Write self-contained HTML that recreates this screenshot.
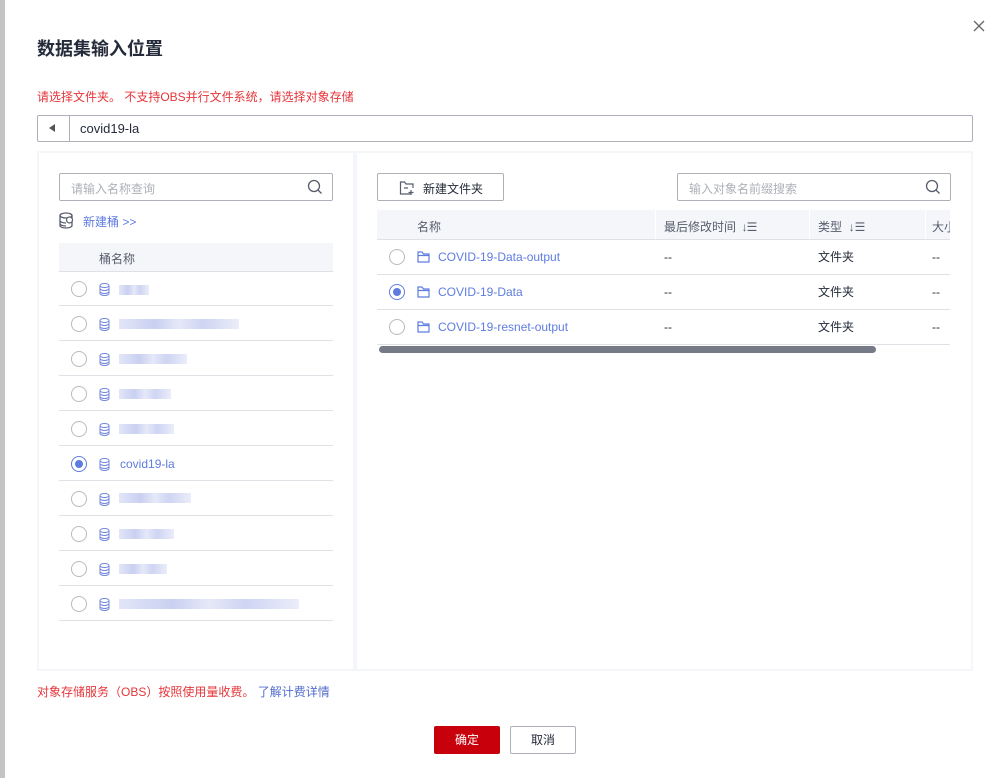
<!DOCTYPE html>
<html><head><meta charset="utf-8"><style>
*{margin:0;padding:0;box-sizing:border-box}
body{width:1004px;height:778px;position:relative;overflow:hidden;background:#fff;font-family:"Liberation Sans","Noto Sans CJK SC",sans-serif;font-size:12px;color:#252b3a}
.a{position:absolute}
.strip{left:0;top:0;width:5px;height:778px;background:#c4c4c4}
.title{left:37px;top:35px;font-size:18px;font-weight:bold;color:#252b3a}
.red{color:#e5353a}
.path{left:37px;top:115px;width:936px;height:27px;border:1px solid #adb0b8;border-radius:2px}
.path .b{position:absolute;left:0;top:0;width:32px;height:25px;border-right:1px solid #adb0b8}
.path .b:after{content:"";position:absolute;left:11px;top:8px;border-right:6px solid #555;border-top:4.5px solid transparent;border-bottom:4.5px solid transparent}
.path .t{position:absolute;left:42px;top:5px;font-size:13px}
.panel{border:2px solid #f5f6fa;background:#fff}
.inp{border:1px solid #adb0b8;border-radius:2px;height:28px;color:#adb0b8;padding:6px 11px}
.sicon{position:absolute;right:9px;top:5px}
.th{background:#f5f6fa;color:#575d6c;height:29px}
.row{position:absolute;left:59px;width:274px;height:35px;border-bottom:1px solid #dfe1e6}
.radio{position:absolute;width:16px;height:16px;border:1px solid #b8bac0;border-radius:50%;background:#fff}
.radio.on{border-color:#5e7ce0}
.radio.on:after{content:"";position:absolute;left:3px;top:3px;width:8px;height:8px;border-radius:50%;background:#5e7ce0}
.blur{position:absolute;height:10px;background:linear-gradient(90deg,#dfe3f7,#c3cbef 30%,#e3e6f8 50%,#c9d0f1 70%,#e8ebf9);opacity:.9}
.link{color:#5e7ce0}
.rrow{position:absolute;left:377px;width:573px;height:35px;border-bottom:1px solid #dfe1e6}
.rrow span{position:absolute;top:10px;line-height:14px}
</style></head><body>
<div class="a strip"></div>
<div class="a title">数据集输入位置</div>
<svg class="a" style="left:973px;top:20px" width="12" height="12"><path d="M1 1l10 10M11 1L1 11" stroke="#666" stroke-width="1.3"/></svg>
<div class="a red" style="left:37px;top:88px">请选择文件夹。 不支持OBS并行文件系统，请选择对象存储</div>
<div class="a path"><div class="b"></div><div class="t">covid19-la</div></div>

<div class="a panel" style="left:37px;top:151px;width:318px;height:520px"></div>
<div class="a panel" style="left:355px;top:151px;width:618px;height:520px"></div>

<div class="a inp" style="left:59px;top:173px;width:274px">请输入名称查询<svg class="sicon" width="16" height="16" viewBox="0 0 16 16"><circle cx="7" cy="7" r="5.5" fill="none" stroke="#575d6c" stroke-width="1.3"/><path d="M11 11l3.5 3.5" stroke="#575d6c" stroke-width="1.3"/></svg></div>
<svg class="a" style="left:59px;top:212px" width="15" height="17" viewBox="0 0 15 17"><ellipse cx="7" cy="3.5" rx="6" ry="2.5" fill="none" stroke="#575d6c" stroke-width="1.3"/><path d="M1 3.5v10c0 1.5 2.7 2.5 6 2.5s6-1 6-2.5v-10M1 8.5c0 1.5 2.7 2.5 6 2.5M1 11.5c0 1.5 2.7 2.5 6 2.5" fill="none" stroke="#575d6c" stroke-width="1.3"/><circle cx="10.5" cy="8" r="3" fill="#fff" stroke="#575d6c" stroke-width="1.2"/></svg>
<div class="a link" style="left:83px;top:213px">新建桶 &gt;&gt;</div>
<div class="a th" style="left:59px;top:243px;width:274px;border-bottom:1px solid #dfe1e6"><span style="position:absolute;left:40px;top:7px">桶名称</span></div>

<div class="row" style="top:271px"><div class="radio" style="left:12px;top:10px"></div><svg class="a" style="left:40px;top:12px" width="11" height="13"><ellipse cx="5.5" cy="2.5" rx="4.5" ry="2" fill="none" stroke="#7186db"/><path d="M1 2.5v8c0 1 2 2 4.5 2s4.5-1 4.5-2v-8M1 5.5c0 1 2 2 4.5 2s4.5-1 4.5-2M1 8.5c0 1 2 2 4.5 2s4.5-1 4.5-2" fill="none" stroke="#7186db"/></svg><div class="blur" style="left:60px;top:14px;width:30px"></div></div>
<div class="row" style="top:306px"><div class="radio" style="left:12px;top:10px"></div><svg class="a" style="left:40px;top:12px" width="11" height="13"><ellipse cx="5.5" cy="2.5" rx="4.5" ry="2" fill="none" stroke="#7186db"/><path d="M1 2.5v8c0 1 2 2 4.5 2s4.5-1 4.5-2v-8M1 5.5c0 1 2 2 4.5 2s4.5-1 4.5-2M1 8.5c0 1 2 2 4.5 2s4.5-1 4.5-2" fill="none" stroke="#7186db"/></svg><div class="blur" style="left:60px;top:13px;width:120px"></div></div>
<div class="row" style="top:341px"><div class="radio" style="left:12px;top:10px"></div><svg class="a" style="left:40px;top:12px" width="11" height="13"><ellipse cx="5.5" cy="2.5" rx="4.5" ry="2" fill="none" stroke="#7186db"/><path d="M1 2.5v8c0 1 2 2 4.5 2s4.5-1 4.5-2v-8M1 5.5c0 1 2 2 4.5 2s4.5-1 4.5-2M1 8.5c0 1 2 2 4.5 2s4.5-1 4.5-2" fill="none" stroke="#7186db"/></svg><div class="blur" style="left:60px;top:13px;width:68px"></div></div>
<div class="row" style="top:376px"><div class="radio" style="left:12px;top:10px"></div><svg class="a" style="left:40px;top:12px" width="11" height="13"><ellipse cx="5.5" cy="2.5" rx="4.5" ry="2" fill="none" stroke="#7186db"/><path d="M1 2.5v8c0 1 2 2 4.5 2s4.5-1 4.5-2v-8M1 5.5c0 1 2 2 4.5 2s4.5-1 4.5-2M1 8.5c0 1 2 2 4.5 2s4.5-1 4.5-2" fill="none" stroke="#7186db"/></svg><div class="blur" style="left:60px;top:13px;width:52px"></div></div>
<div class="row" style="top:411px"><div class="radio" style="left:12px;top:10px"></div><svg class="a" style="left:40px;top:12px" width="11" height="13"><ellipse cx="5.5" cy="2.5" rx="4.5" ry="2" fill="none" stroke="#7186db"/><path d="M1 2.5v8c0 1 2 2 4.5 2s4.5-1 4.5-2v-8M1 5.5c0 1 2 2 4.5 2s4.5-1 4.5-2M1 8.5c0 1 2 2 4.5 2s4.5-1 4.5-2" fill="none" stroke="#7186db"/></svg><div class="blur" style="left:60px;top:13px;width:55px"></div></div>
<div class="row" style="top:446px"><div class="radio on" style="left:12px;top:10px"></div><svg class="a" style="left:40px;top:12px" width="11" height="13"><ellipse cx="5.5" cy="2.5" rx="4.5" ry="2" fill="none" stroke="#7186db"/><path d="M1 2.5v8c0 1 2 2 4.5 2s4.5-1 4.5-2v-8M1 5.5c0 1 2 2 4.5 2s4.5-1 4.5-2M1 8.5c0 1 2 2 4.5 2s4.5-1 4.5-2" fill="none" stroke="#7186db"/></svg><span class="a link" style="left:61px;top:11px">covid19-la</span></div>
<div class="row" style="top:481px"><div class="radio" style="left:12px;top:10px"></div><svg class="a" style="left:40px;top:12px" width="11" height="13"><ellipse cx="5.5" cy="2.5" rx="4.5" ry="2" fill="none" stroke="#7186db"/><path d="M1 2.5v8c0 1 2 2 4.5 2s4.5-1 4.5-2v-8M1 5.5c0 1 2 2 4.5 2s4.5-1 4.5-2M1 8.5c0 1 2 2 4.5 2s4.5-1 4.5-2" fill="none" stroke="#7186db"/></svg><div class="blur" style="left:60px;top:12px;width:72px"></div></div>
<div class="row" style="top:516px"><div class="radio" style="left:12px;top:10px"></div><svg class="a" style="left:40px;top:12px" width="11" height="13"><ellipse cx="5.5" cy="2.5" rx="4.5" ry="2" fill="none" stroke="#7186db"/><path d="M1 2.5v8c0 1 2 2 4.5 2s4.5-1 4.5-2v-8M1 5.5c0 1 2 2 4.5 2s4.5-1 4.5-2M1 8.5c0 1 2 2 4.5 2s4.5-1 4.5-2" fill="none" stroke="#7186db"/></svg><div class="blur" style="left:60px;top:13px;width:55px"></div></div>
<div class="row" style="top:551px"><div class="radio" style="left:12px;top:10px"></div><svg class="a" style="left:40px;top:12px" width="11" height="13"><ellipse cx="5.5" cy="2.5" rx="4.5" ry="2" fill="none" stroke="#7186db"/><path d="M1 2.5v8c0 1 2 2 4.5 2s4.5-1 4.5-2v-8M1 5.5c0 1 2 2 4.5 2s4.5-1 4.5-2M1 8.5c0 1 2 2 4.5 2s4.5-1 4.5-2" fill="none" stroke="#7186db"/></svg><div class="blur" style="left:60px;top:13px;width:48px"></div></div>
<div class="row" style="top:586px"><div class="radio" style="left:12px;top:10px"></div><svg class="a" style="left:40px;top:12px" width="11" height="13"><ellipse cx="5.5" cy="2.5" rx="4.5" ry="2" fill="none" stroke="#7186db"/><path d="M1 2.5v8c0 1 2 2 4.5 2s4.5-1 4.5-2v-8M1 5.5c0 1 2 2 4.5 2s4.5-1 4.5-2M1 8.5c0 1 2 2 4.5 2s4.5-1 4.5-2" fill="none" stroke="#7186db"/></svg><div class="blur" style="left:60px;top:13px;width:180px"></div></div>

<div class="a inp" style="left:377px;top:173px;width:127px;color:#252b3a;padding:6px 0 0 45px;border-color:#adb0b8"><svg class="a" style="left:21px;top:6px" width="16" height="16" viewBox="0 0 16 16"><path d="M6 2H1.5v12H12M1.5 2h4l1.5 2h7v4" fill="none" stroke="#575d6c" stroke-width="1.2"/><path d="M5 8h4M12 10v5M9.5 12.5h5" stroke="#575d6c" stroke-width="1.2"/></svg>新建文件夹</div>
<div class="a inp" style="left:677px;top:173px;width:274px">输入对象名前缀搜索<svg class="sicon" width="16" height="16" viewBox="0 0 16 16"><circle cx="7" cy="7" r="5.5" fill="none" stroke="#575d6c" stroke-width="1.3"/><path d="M11 11l3.5 3.5" stroke="#575d6c" stroke-width="1.3"/></svg></div>

<div class="a th" style="left:377px;top:210px;width:573px;height:30px;border-bottom:1px solid #dfe1e6;overflow:hidden;white-space:nowrap">
<span class="a" style="left:40px;top:8px">名称</span>
<span class="a" style="left:278px;top:0;width:1px;height:29px;background:#fff"></span>
<span class="a" style="left:287px;top:8px">最后修改时间 <span style="color:#575d6c;letter-spacing:-1px">&nbsp;↓☰</span></span>
<span class="a" style="left:432px;top:0;width:1px;height:29px;background:#fff"></span>
<span class="a" style="left:441px;top:8px">类型 <span style="color:#575d6c">&nbsp;↓☰</span></span>
<span class="a" style="left:548px;top:0;width:1px;height:29px;background:#fff"></span>
<span class="a" style="left:555px;top:8px">大小</span>
</div>
<div class="rrow" style="top:240px"><div class="radio" style="left:12px;top:9px"></div><svg class="a" style="left:40px;top:11px" width="13" height="12"><path d="M1 1h4l1.5 2H12v8H1zM1 4.5h11" fill="none" stroke="#5e7ce0" stroke-width="1.2"/></svg><span class="link" style="left:61px">COVID-19-Data-output</span><span style="left:287px">--</span><span style="left:441px">文件夹</span><span style="left:555px">--</span></div>
<div class="rrow" style="top:275px"><div class="radio on" style="left:12px;top:9px"></div><svg class="a" style="left:40px;top:11px" width="13" height="12"><path d="M1 1h4l1.5 2H12v8H1zM1 4.5h11" fill="none" stroke="#5e7ce0" stroke-width="1.2"/></svg><span class="link" style="left:61px">COVID-19-Data</span><span style="left:287px">--</span><span style="left:441px">文件夹</span><span style="left:555px">--</span></div>
<div class="rrow" style="top:310px"><div class="radio" style="left:12px;top:9px"></div><svg class="a" style="left:40px;top:11px" width="13" height="12"><path d="M1 1h4l1.5 2H12v8H1zM1 4.5h11" fill="none" stroke="#5e7ce0" stroke-width="1.2"/></svg><span class="link" style="left:61px">COVID-19-resnet-output</span><span style="left:287px">--</span><span style="left:441px">文件夹</span><span style="left:555px">--</span></div>
<div class="a" style="left:379px;top:346px;width:497px;height:7px;border-radius:4px;background:#767a87"></div>

<div class="a red" style="left:37px;top:683px">对象存储服务（OBS）按照使用量收费。 <span style="color:#526ecc">了解计费详情</span></div>
<div class="a" style="left:434px;top:726px;width:66px;height:28px;background:#c7000b;color:#fff;border-radius:2px;text-align:center;line-height:28px">确定</div>
<div class="a" style="left:510px;top:726px;width:66px;height:28px;border:1px solid #adb0b8;border-radius:2px;text-align:center;line-height:26px">取消</div>
</body></html>
